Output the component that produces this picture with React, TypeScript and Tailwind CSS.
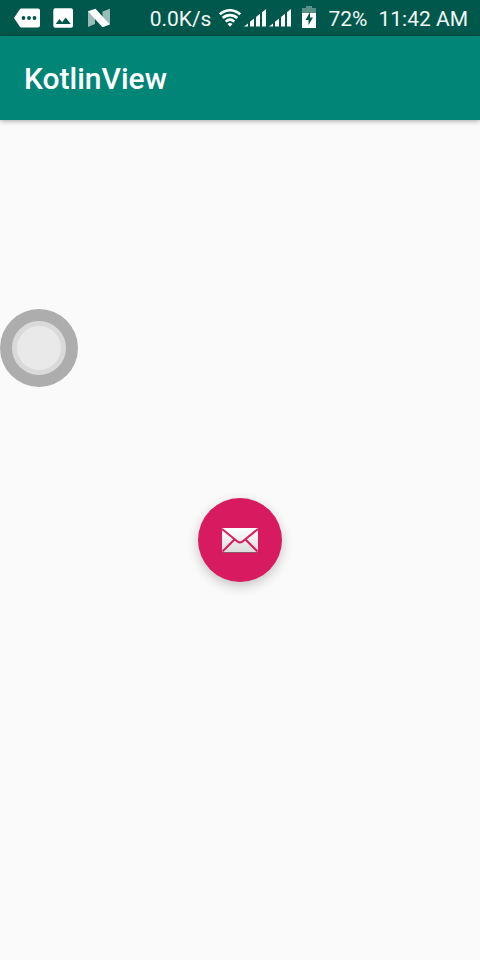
import React from "react";

function MoreTagIcon() {
  return (
    <svg width="26" height="20" viewBox="0 0 26 20" aria-hidden="true">
      <path
        fill="#fff"
        d="M7.400.500H24a2 2 0 0 1 2 2v15a2 2 0 0 1-2 2H7.400a2 2 0 0 1-1.700-.900L0 10l5.700-8.600A2 2 0 0 1 7.400.500Z"
      />
      <g fill="#00574b">
        <circle cx="9.500" cy="10" r="1.900" />
        <circle cx="15" cy="10" r="1.900" />
        <circle cx="20.500" cy="10" r="1.900" />
      </g>
    </svg>
  );
}

function PictureIcon() {
  return (
    <svg width="22" height="20" viewBox="0 0 22 20" aria-hidden="true">
      <path
        fill="#fff"
        fillRule="evenodd"
        d="M2.300.3h15.700a2 2 0 0 1 2 2v15.400a2 2 0 0 1-2 2H2.300a2 2 0 0 1-2-2V2.300a2 2 0 0 1 2-2ZM6.500 11L2.700 16h15l-5-6.500-3.600 4.800Z"
      />
    </svg>
  );
}

function NougatIcon() {
  return (
    <svg width="22" height="20" viewBox="0 0 22 20" aria-hidden="true">
      <path fill="#fff" fillOpacity=".6" d="M0 3L7 9v7L0 19ZM14.500 3.500L22 .8v16L14.500 12Z" />
      <path fill="#fff" d="M0 3.300L7.500 .8L21.800 16.500L14.500 19.200Z" />
    </svg>
  );
}

function WifiIcon() {
  return (
    <svg width="22" height="18" viewBox="0 0 22 18" aria-hidden="true">
      <g fill="none" stroke="#fff" strokeWidth="2.600">
        <path d="M.8 5.400C6.800-.1 15.200-.1 21.200 5.400" />
        <path d="M3.700 9C8 5.100 14 5.100 18.300 9" />
        <path d="M6.700 12.600C9.300 10.300 12.700 10.300 15.300 12.600" />
      </g>
      <path fill="#fff" d="M8.500 14.900Q11 13 13.500 14.900L11 17.700Z" />
    </svg>
  );
}

function SignalIcon() {
  return (
    <svg width="22" height="18" viewBox="0 0 22 18" aria-hidden="true">
      <path
        fill="#fff"
        d="M0 17.500L4 14.500v3ZM6 12.800L10 9.600v7.900h-4ZM12 8L16 4.800v12.700h-4ZM18 3.200L22 0v17.500h-4Z"
      />
    </svg>
  );
}

function BatteryIcon() {
  return (
    <svg width="14" height="22" viewBox="0 0 14 22" aria-hidden="true">
      <path fill="#fff" fillOpacity=".35" d="M4 0h6v2h4v5H9L8 6.500L6.500 7H0V2h4Z" />
      <path fill="#fff" fillRule="evenodd" d="M0 7H7.500L3.500 14h3v5L11 11.500H8V7h6v15H0Z" />
    </svg>
  );
}

function EnvelopeIcon() {
  return (
    <svg width="36" height="26" viewBox="0 0 36 26" aria-hidden="true">
      <defs>
        <linearGradient id="paper" x1="0" y1="0" x2="0" y2="1">
          <stop offset="0" stopColor="#ffffff" />
          <stop offset="1" stopColor="#dcdcdc" />
        </linearGradient>
      </defs>
      <path fill="#8b5a68" d="M1 24h34v2H1Z" />
      <path fill="url(#paper)" d="M0 1h36v24H0Z" />
      <path
        fill="none"
        stroke="#d81b60"
        strokeWidth="2"
        d="M0 2L15.500 14.500Q18 16.500 20.500 14.500L36 2M.5 24.500L12.500 12.500M35.500 24.500L23.500 12.500"
      />
    </svg>
  );
}

function StatusBar() {
  return (
    <div className="flex h-9 items-center justify-between bg-[#00574b] pl-3.5 pr-3 text-[21px] leading-6 text-[#f2f7f6]">
      <div className="flex items-center gap-[13px]">
        <MoreTagIcon />
        <PictureIcon />
        <NougatIcon />
      </div>
      <div className="flex items-center whitespace-nowrap">
        <span className="pt-0.5">0.0K/s</span>
        <span className="ml-2 flex items-center gap-[3px]">
          <WifiIcon />
          <SignalIcon />
          <SignalIcon />
        </span>
        <span className="ml-[11px] pb-0.5">
          <BatteryIcon />
        </span>
        <span className="ml-3 pt-0.5">72%</span>
        <span className="ml-[11px] pt-0.5">11:42 AM</span>
      </div>
    </div>
  );
}

export default function App() {
  return (
    <div className="relative flex min-h-screen flex-col bg-[#fafafa] font-['Roboto',sans-serif]">
      <StatusBar />
      <header className="flex h-21 items-center bg-[#008577] px-6 pt-0.5 shadow-[0_1px_5px_rgba(0,0,0,0.35)]">
        <h1 className="text-[30px] font-medium leading-9 text-white">KotlinView</h1>
      </header>
      <main className="flex flex-1 items-center justify-center">
        <button
          type="button"
          aria-label="Send mail"
          className="flex size-21 items-center justify-center rounded-full bg-[#d81b60] shadow-[0_4px_12px_rgba(0,0,0,0.22)]"
        >
          <EnvelopeIcon />
        </button>
      </main>
      <button
        type="button"
        aria-label="Assistive touch"
        className="absolute left-0 top-[309px] flex size-[78px] items-center justify-center rounded-full bg-[#adadad]"
      >
        <span className="size-[54px] rounded-full border-5 border-[#dadada] bg-[#e9e9e9]" />
      </button>
    </div>
  );
}
